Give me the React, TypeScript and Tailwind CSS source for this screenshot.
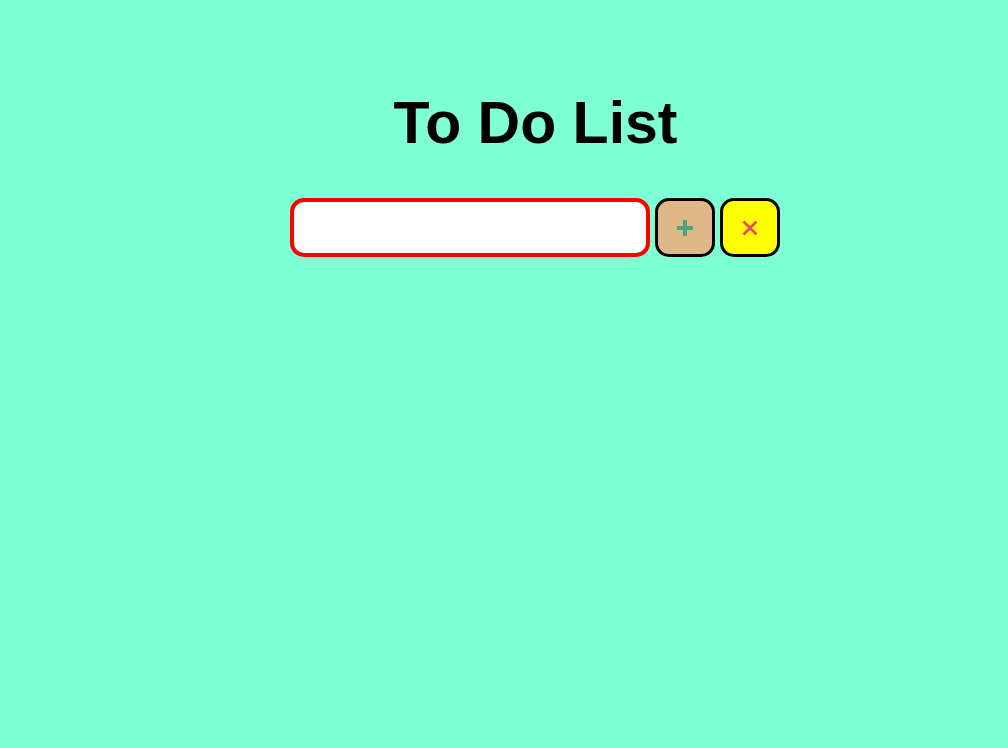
import React from "react";

export default function App() {
  return (
    <div className="min-h-screen w-full bg-[#7fffd4] flex flex-col items-center pl-[63px] pt-[89px]" style={{ fontFamily: '"Liberation Sans", Arial, sans-serif' }}>
      <h1 className="text-[59px] leading-[68px] font-bold text-black m-0">To Do List</h1>
      <div className="mt-[41px] flex gap-[5px] ml-[-1px]">
        <input type="text" className="w-[360px] h-[59px] bg-white border-[4px] border-[#ff0000] rounded-[14px] outline-none px-3 text-lg" />
        <button className="w-[60px] h-[59px] bg-[#deb887] border-[3px] border-black rounded-[14px] flex items-center justify-center">
          <svg width="18" height="18" viewBox="0 0 18 18">
            <path d="M9 1 V17 M1 9 H17" stroke="#4fa083" strokeWidth="4" />
          </svg>
        </button>
        <button className="w-[60px] h-[59px] bg-[#ffff00] border-[3px] border-black rounded-[14px] flex items-center justify-center">
          <svg width="16" height="16" viewBox="0 0 16 16">
            <path d="M1.5 1.5 L14.5 14.5 M14.5 1.5 L1.5 14.5" stroke="#ec4660" strokeWidth="2.6" />
          </svg>
        </button>
      </div>
    </div>
  );
}
